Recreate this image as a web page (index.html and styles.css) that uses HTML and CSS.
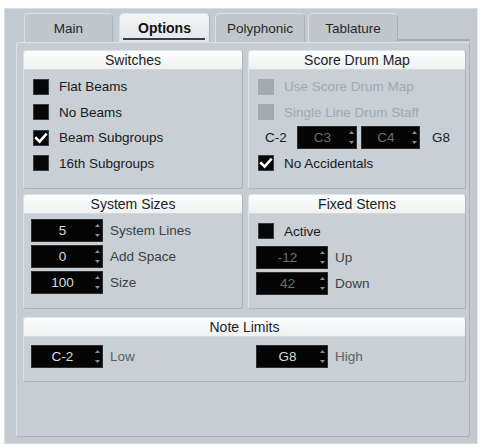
FILE: index.html
```
<!DOCTYPE html>
<html>
<head>
<meta charset="utf-8">
<link rel="stylesheet" href="styles.css">
</head>
<body>
<div class="window">
  <div class="tabs">
    <div class="tab t-main">Main</div>
    <div class="tab active t-options"><span>Options</span></div>
    <div class="tab t-poly">Polyphonic</div>
    <div class="tab t-tabl">Tablature</div>
    <div class="tab-fill"></div>
  </div>
  <div class="panel">
    <div class="cols">
      <section class="group g-switches">
        <div class="hdr">Switches</div>
        <div class="body rows">
          <div class="row"><span class="cb"></span><span class="lbl">Flat Beams</span></div>
          <div class="row"><span class="cb"></span><span class="lbl">No Beams</span></div>
          <div class="row"><span class="cb on"><svg viewBox="0 0 16 16" width="16" height="16"><path d="M3.2 8.2 L6.6 11.6 L12.8 4.6" fill="none" stroke="#fff" stroke-width="2.6" stroke-linecap="square"/></svg></span><span class="lbl">Beam Subgroups</span></div>
          <div class="row"><span class="cb"></span><span class="lbl">16th Subgroups</span></div>
        </div>
      </section>
      <section class="group g-drum">
        <div class="hdr">Score Drum Map</div>
        <div class="body rows">
          <div class="row dis"><span class="cb"></span><span class="lbl">Use Score Drum Map</span></div>
          <div class="row dis"><span class="cb"></span><span class="lbl">Single Line Drum Staff</span></div>
          <div class="row range">
            <span class="note n-lo">C-2</span>
            <div class="spin w60 dim"><span class="val">C3</span><span class="arr"><svg viewBox="0 0 5 3" width="5" height="3"><path d="M0 3 L2.5 0 L5 3Z" fill="#8a8f94"/></svg><svg viewBox="0 0 5 3" width="5" height="3"><path d="M0 0 L2.5 3 L5 0Z" fill="#8a8f94"/></svg></span></div>
            <div class="spin w59 dim"><span class="val">C4</span><span class="arr"><svg viewBox="0 0 5 3" width="5" height="3"><path d="M0 3 L2.5 0 L5 3Z" fill="#8a8f94"/></svg><svg viewBox="0 0 5 3" width="5" height="3"><path d="M0 0 L2.5 3 L5 0Z" fill="#8a8f94"/></svg></span></div>
            <span class="note n-hi">G8</span>
          </div>
          <div class="row"><span class="cb on"><svg viewBox="0 0 16 16" width="16" height="16"><path d="M3.2 8.2 L6.6 11.6 L12.8 4.6" fill="none" stroke="#fff" stroke-width="2.6" stroke-linecap="square"/></svg></span><span class="lbl">No Accidentals</span></div>
        </div>
      </section>
      <section class="group g-sizes">
        <div class="hdr">System Sizes</div>
        <div class="body stack">
          <div class="srow"><div class="spin"><span class="val">5</span><span class="arr"><svg viewBox="0 0 5 3" width="5" height="3"><path d="M0 3 L2.5 0 L5 3Z" fill="#8a8f94"/></svg><svg viewBox="0 0 5 3" width="5" height="3"><path d="M0 0 L2.5 3 L5 0Z" fill="#8a8f94"/></svg></span></div><span class="slbl">System Lines</span></div>
          <div class="srow"><div class="spin"><span class="val">0</span><span class="arr"><svg viewBox="0 0 5 3" width="5" height="3"><path d="M0 3 L2.5 0 L5 3Z" fill="#8a8f94"/></svg><svg viewBox="0 0 5 3" width="5" height="3"><path d="M0 0 L2.5 3 L5 0Z" fill="#8a8f94"/></svg></span></div><span class="slbl">Add Space</span></div>
          <div class="srow"><div class="spin"><span class="val">100</span><span class="arr"><svg viewBox="0 0 5 3" width="5" height="3"><path d="M0 3 L2.5 0 L5 3Z" fill="#8a8f94"/></svg><svg viewBox="0 0 5 3" width="5" height="3"><path d="M0 0 L2.5 3 L5 0Z" fill="#8a8f94"/></svg></span></div><span class="slbl">Size</span></div>
        </div>
      </section>
      <section class="group g-stems">
        <div class="hdr">Fixed Stems</div>
        <div class="body stack">
          <div class="crow"><span class="cb"></span><span class="lbl">Active</span></div>
          <div class="srow"><div class="spin dim"><span class="val">-12</span><span class="arr"><svg viewBox="0 0 5 3" width="5" height="3"><path d="M0 3 L2.5 0 L5 3Z" fill="#8a8f94"/></svg><svg viewBox="0 0 5 3" width="5" height="3"><path d="M0 0 L2.5 3 L5 0Z" fill="#8a8f94"/></svg></span></div><span class="slbl">Up</span></div>
          <div class="srow"><div class="spin dim"><span class="val">42</span><span class="arr"><svg viewBox="0 0 5 3" width="5" height="3"><path d="M0 3 L2.5 0 L5 3Z" fill="#8a8f94"/></svg><svg viewBox="0 0 5 3" width="5" height="3"><path d="M0 0 L2.5 3 L5 0Z" fill="#8a8f94"/></svg></span></div><span class="slbl">Down</span></div>
        </div>
      </section>
    </div>
    <section class="group g-limits">
      <div class="hdr">Note Limits</div>
      <div class="body limits">
        <div class="srow"><div class="spin"><span class="val">C-2</span><span class="arr"><svg viewBox="0 0 5 3" width="5" height="3"><path d="M0 3 L2.5 0 L5 3Z" fill="#8a8f94"/></svg><svg viewBox="0 0 5 3" width="5" height="3"><path d="M0 0 L2.5 3 L5 0Z" fill="#8a8f94"/></svg></span></div><span class="slbl light">Low</span></div>
        <div class="srow"><div class="spin"><span class="val">G8</span><span class="arr"><svg viewBox="0 0 5 3" width="5" height="3"><path d="M0 3 L2.5 0 L5 3Z" fill="#8a8f94"/></svg><svg viewBox="0 0 5 3" width="5" height="3"><path d="M0 0 L2.5 3 L5 0Z" fill="#8a8f94"/></svg></span></div><span class="slbl light">High</span></div>
      </div>
    </section>
  </div>
</div>
</body>
</html>
```
FILE: styles.css
```
* { box-sizing: border-box; }
html, body { margin: 0; padding: 0; background: #fdfdfd; }
body {
  font-family: "Liberation Sans", Arial, sans-serif;
  font-size: 13.5px;
  color: #1a1c1e;
  width: 481px;
  height: 446px;
  overflow: hidden;
}
.window {
  margin: 8px 0 0 4px;
  width: 474px;
  height: 436px;
  background: #c3cad0;
  border: 1px solid #d7dce0;
  border-right-color: #e8ebee;
  padding: 4px 0 0 0;
}
.tabs {
  display: flex;
  height: 29px;
  padding-left: 19px;
  align-items: stretch;
}
.tab {
  height: 29px;
  display: flex;
  align-items: center;
  justify-content: center;
  background: #bfc6cc;
  border: 1px solid #dde1e5;
  border-bottom: none;
  border-right-color: #a9b1b8;
  border-radius: 5px 5px 0 0;
  color: #25282b;
}
.t-main { width: 89px; }
.t-options { width: 91px; margin-left: 6px; }
.t-poly { width: 90px; margin-left: 5px; }
.t-tabl { width: 90px; margin-left: 3px; }
.tab.active {
  background: linear-gradient(#f3f5f6, #e3e7ea);
  font-weight: bold;
  font-size: 14px;
  color: #111;
  position: relative;
}
.tab.active::after {
  content: "";
  position: absolute;
  left: 3px;
  right: 4px;
  bottom: 2px;
  height: 2px;
  background: #3a3d40;
}
.tab-fill {
  flex: 0 0 72px;
  border-bottom: 2px solid #a9b1b8;
  margin-bottom: 1px;
}
.panel {
  margin-left: 11px;
  width: 454px;
  height: 395px;
  background: #c6cdd3;
  border: 1px solid #dde2e6;
  border-right-color: #aab2b9;
  border-bottom-color: #aab2b9;
  border-radius: 3px;
  padding: 7px 0 0 6px;
}
.cols {
  display: grid;
  grid-template-columns: 220px 218px;
  grid-template-rows: 139px 115px;
  column-gap: 5px;
  row-gap: 5px;
}
.group {
  background: #c8cfd5;
  border: 1px solid #e0e4e8;
  border-right-color: #adb5bc;
  border-bottom-color: #adb5bc;
  border-radius: 3px;
  overflow: hidden;
}
.hdr {
  height: 19px;
  background: linear-gradient(#fdfdfd, #eef1f3);
  border-bottom: 1px solid #d3d8dc;
  text-align: center;
  font-size: 14px;
  line-height: 18px;
  color: #1b1d1f;
}
.rows { padding: 4px 0 0 9px; }
.row {
  height: 25.5px;
  display: flex;
  align-items: center;
}
.cb {
  width: 16px;
  height: 16px;
  background: #070707;
  border: 1px solid #3a3d40;
  flex: none;
  position: relative;
}
.cb svg { position: absolute; left: -1px; top: -1px; }
.lbl { margin-left: 10px; color: #181a1c; }
.row.dis .cb { background: #a3aab0; border-color: #a3aab0; }
.row.dis .lbl { color: #a2a9af; }
.range .n-lo { margin-left: 7px; width: 32px; color: #1b1d1f; }
.range .n-hi { margin-left: 12px; color: #1b1d1f; }
.w60 { width: 60px !important; }
.w59 { width: 59px !important; margin-left: 4px; }
.spin {
  width: 72px;
  height: 23px;
  background: #050505;
  border: 1px solid #2c2f32;
  display: flex;
  flex: none;
}
.spin .val {
  flex: 1;
  text-align: center;
  color: #dadcdd;
  line-height: 21px;
  padding-left: 1px;
}
.spin.dim .val { color: #6b6f73; }
.spin .arr {
  width: 10px;
  display: flex;
  flex-direction: column;
  justify-content: space-between;
  align-items: center;
  padding: 4px 0 4px 0;
}
.spin .arr svg { display: block; }
.stack {
  padding: 5px 0 0 7px;
  display: flex;
  flex-direction: column;
  gap: 3px;
}
.srow {
  display: flex;
  align-items: center;
  height: 23px;
}
.slbl { margin-left: 7px; color: #3b4045; }
.slbl.light { color: #5c6166; }
.crow {
  height: 24px;
  display: flex;
  align-items: center;
  padding-left: 2px;
}
.g-limits {
  margin-top: 8px;
  width: 443px;
  height: 65px;
}
.limits {
  display: grid;
  grid-template-columns: 225px 1fr;
  padding: 8px 0 0 7px;
}
```
